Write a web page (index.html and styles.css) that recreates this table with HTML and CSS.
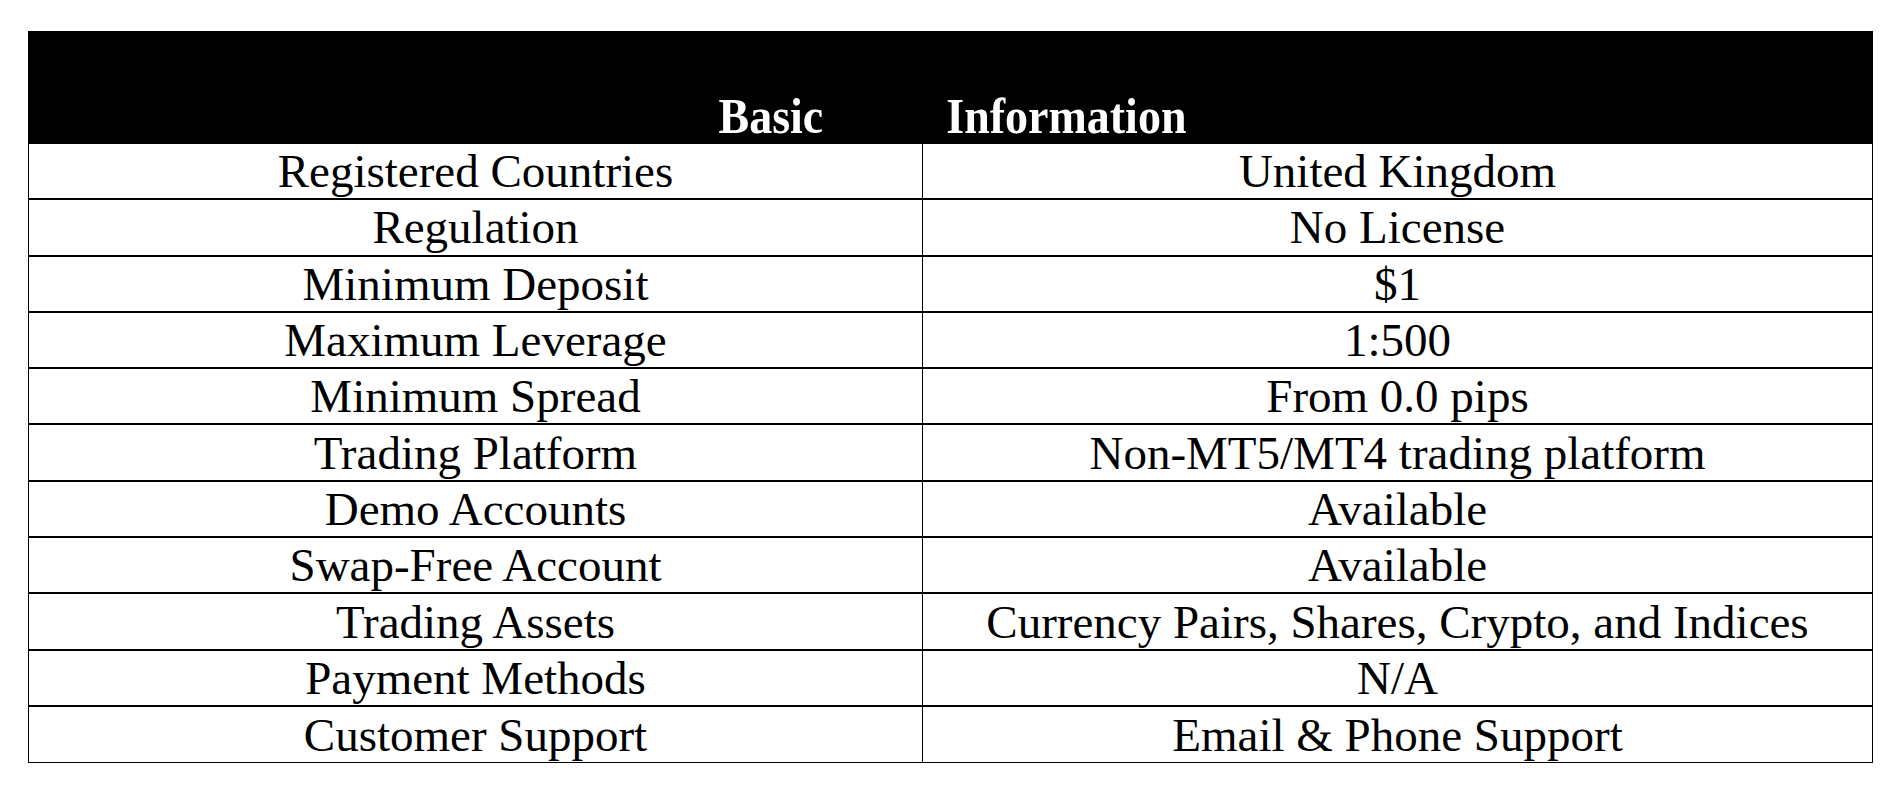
FILE: index.html
```html
<!DOCTYPE html>
<html lang="en">
<head>
<meta charset="utf-8">
<title>Basic Information</title>
<link rel="stylesheet" href="styles.css">
</head>
<body>
<div class="sheet">
  <div class="head"><span class="ht">Basic</span><span class="ht">Information</span></div>
  <div class="row"><div class="c">Registered Countries</div><div class="c v">United Kingdom</div></div>
  <div class="row"><div class="c">Regulation</div><div class="c v">No License</div></div>
  <div class="row"><div class="c">Minimum Deposit</div><div class="c v">$1</div></div>
  <div class="row"><div class="c">Maximum Leverage</div><div class="c v">1:500</div></div>
  <div class="row"><div class="c">Minimum Spread</div><div class="c v">From 0.0 pips</div></div>
  <div class="row"><div class="c">Trading Platform</div><div class="c v">Non-MT5/MT4 trading platform</div></div>
  <div class="row"><div class="c">Demo Accounts</div><div class="c v">Available</div></div>
  <div class="row"><div class="c">Swap-Free Account</div><div class="c v">Available</div></div>
  <div class="row"><div class="c">Trading Assets</div><div class="c v">Currency Pairs, Shares, Crypto, and Indices</div></div>
  <div class="row"><div class="c">Payment Methods</div><div class="c v">N/A</div></div>
  <div class="row last"><div class="c">Customer Support</div><div class="c v">Email &amp; Phone Support</div></div>
</div>
</body>
</html>
```
FILE: styles.css
```css
html, body {
  margin: 0;
  padding: 0;
  background: #fff;
}
body {
  font-family: "Liberation Serif", "Times New Roman", serif;
  color: #000;
}
.sheet {
  margin: 31px 0 0 28px;
  width: 1845px;
  box-sizing: border-box;
  border-left: 1px solid #000;
  border-right: 1px solid #000;
  border-bottom: 1px solid #000;
}
.head {
  height: 113px;
  background: #000;
  display: flex;
  justify-content: center;
  align-items: flex-end;
  gap: 123px;
  padding-left: 4px;
  padding-bottom: 6.5px;
  box-sizing: border-box;
}
.ht {
  display: inline-block;
  color: #fff;
  font-weight: bold;
  font-size: 46px;
  line-height: 40px;
  transform: scaleY(1.12);
  transform-origin: 50% 35.5px;
}
.row {
  display: grid;
  grid-template-columns: 893px 950px;
  height: 56.3px;
  box-sizing: border-box;
  border-bottom: 2px solid #000;
}
.row.last {
  border-bottom: none;
  height: 55.3px;
}
.c {
  display: flex;
  align-items: center;
  justify-content: center;
  font-size: 47px;
  white-space: nowrap;
  overflow: hidden;
}
.c.v {
  border-left: 1px solid #000;
}
```
